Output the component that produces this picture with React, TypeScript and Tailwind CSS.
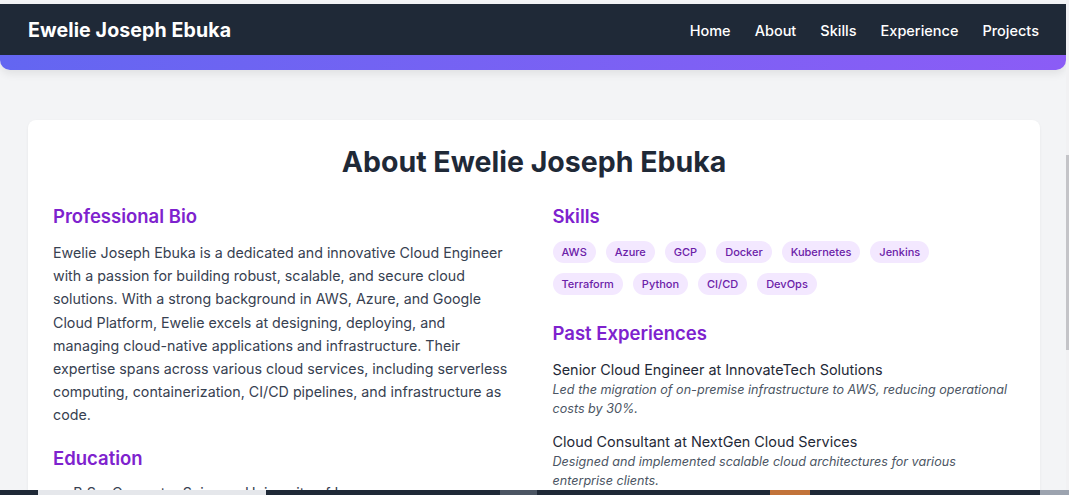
import React from "react"

const skills = [
  "AWS",
  "Azure",
  "GCP",
  "Docker",
  "Kubernetes",
  "Jenkins",
  "Terraform",
  "Python",
  "CI/CD",
  "DevOps",
]

const experiences = [
  {
    title: "Senior Cloud Engineer at InnovateTech Solutions",
    text: "Led the migration of on-premise infrastructure to AWS, reducing operational costs by 30%.",
  },
  {
    title: "Cloud Consultant at NextGen Cloud Services",
    text: "Designed and implemented scalable cloud architectures for various enterprise clients.",
  },
]

const links = ["Home", "About", "Skills", "Experience", "Projects"]

export default function App() {
  return (
    <div
      className="relative flex h-[495px] w-full overflow-hidden bg-[#f3f4f6]"
      style={{ fontFamily: "Inter, 'Noto Sans', sans-serif" }}
    >
      <div className="flex min-w-0 flex-1 flex-col">
        {/* Header */}
        <header className="mt-[4px] rounded-b-[10px] bg-gradient-to-r from-[#6366f1] to-[#8b5cf6] pb-[15px] shadow-[0_4px_8px_rgba(0,0,0,0.08)]">
          <nav className="flex h-[51px] items-center justify-between bg-[#1f2937] pt-[2px] pl-[28px] pr-[27px]">
            <span className="text-[19.6px] font-bold tracking-[0.1px] text-white">
              Ewelie Joseph Ebuka
            </span>
            <ul className="flex items-center gap-[24px] text-[14.5px] font-medium text-white">
              {links.map((l) => (
                <li key={l}>{l}</li>
              ))}
            </ul>
          </nav>
        </header>

        {/* About card */}
        <main className="ml-[28px] mr-[26px] mt-[50px] rounded-[8px] bg-white px-[25px] pt-[24px] pb-8 shadow-[0_1px_3px_rgba(0,0,0,0.06)]">
          <h1 className="text-center text-[28.5px] leading-[36px] font-bold text-[#1f2937]">
            About Ewelie Joseph Ebuka
          </h1>

          <div className="mt-[22px] grid grid-cols-2 gap-x-[37px]">
            {/* Left column */}
            <div>
              <h2 className="text-[18.5px] leading-[28px] font-semibold text-[#7e22ce]">
                Professional Bio
              </h2>
              <p className="mt-[11px] text-[14.25px] leading-[23.2px] text-[#374151]">
                Ewelie Joseph Ebuka is a dedicated and innovative Cloud Engineer
                with a passion for building robust, scalable, and secure cloud
                solutions. With a strong background in AWS, Azure, and Google
                Cloud Platform, Ewelie excels at designing, deploying, and
                managing cloud-native applications and infrastructure. Their
                expertise spans across various cloud services, including
                serverless computing, containerization, CI/CD pipelines, and
                infrastructure as code.
              </p>
              <h2 className="mt-[17px] text-[18.5px] leading-[28px] font-semibold text-[#7e22ce]">
                Education
              </h2>
              <ul className="mt-[9px] list-inside list-disc text-[14.25px] leading-[23px] text-[#374151]">
                <li>B.Sc. Computer Science, University of Lagos</li>
              </ul>
            </div>

            {/* Right column */}
            <div>
              <h2 className="text-[18.5px] leading-[28px] font-semibold text-[#7e22ce]">
                Skills
              </h2>
              <div className="mt-[11px] flex flex-wrap">
                {skills.map((s) => (
                  <span
                    key={s}
                    className="mr-[10px] mb-[10px] rounded-full bg-[#f3e8ff] px-[9px] py-[3px] text-[11px] leading-[16px] font-medium text-[#6b21a8]"
                  >
                    {s}
                  </span>
                ))}
              </div>

              <h2 className="mt-[14px] text-[18.5px] leading-[28px] font-semibold text-[#7e22ce]">
                Past Experiences
              </h2>
              <div className="mt-[12px] flex flex-col gap-[13px]">
                {experiences.map((e) => (
                  <div key={e.title}>
                    <h3 className="text-[14.4px] leading-[21px] text-[#1f2937]">
                      {e.title}
                    </h3>
                    <p className="text-[12.6px] leading-[19px] italic text-[#4b5563]">
                      {e.text}
                    </p>
                  </div>
                ))}
              </div>
            </div>
          </div>
        </main>
      </div>

      {/* Scrollbar */}
      <div className="flex w-[3px] flex-col bg-[#f1f1f3]">
        <div className="mt-[155px] h-[195px] bg-[#c4c4c8]" />
      </div>

      {/* Bottom strip */}
      <div className="absolute right-0 bottom-0 left-0 flex h-[5px] bg-[#1f2937]">
        <div className="ml-[38px] w-[228px] bg-[#e5e7eb]" />
        <div className="ml-[234px] w-[37px] bg-[#4b5563]" />
        <div className="ml-[233px] w-[40px] bg-[#c2733a]" />
        <div className="ml-[230px] flex-1 bg-[#9ca3af]" />
      </div>
    </div>
  )
}
